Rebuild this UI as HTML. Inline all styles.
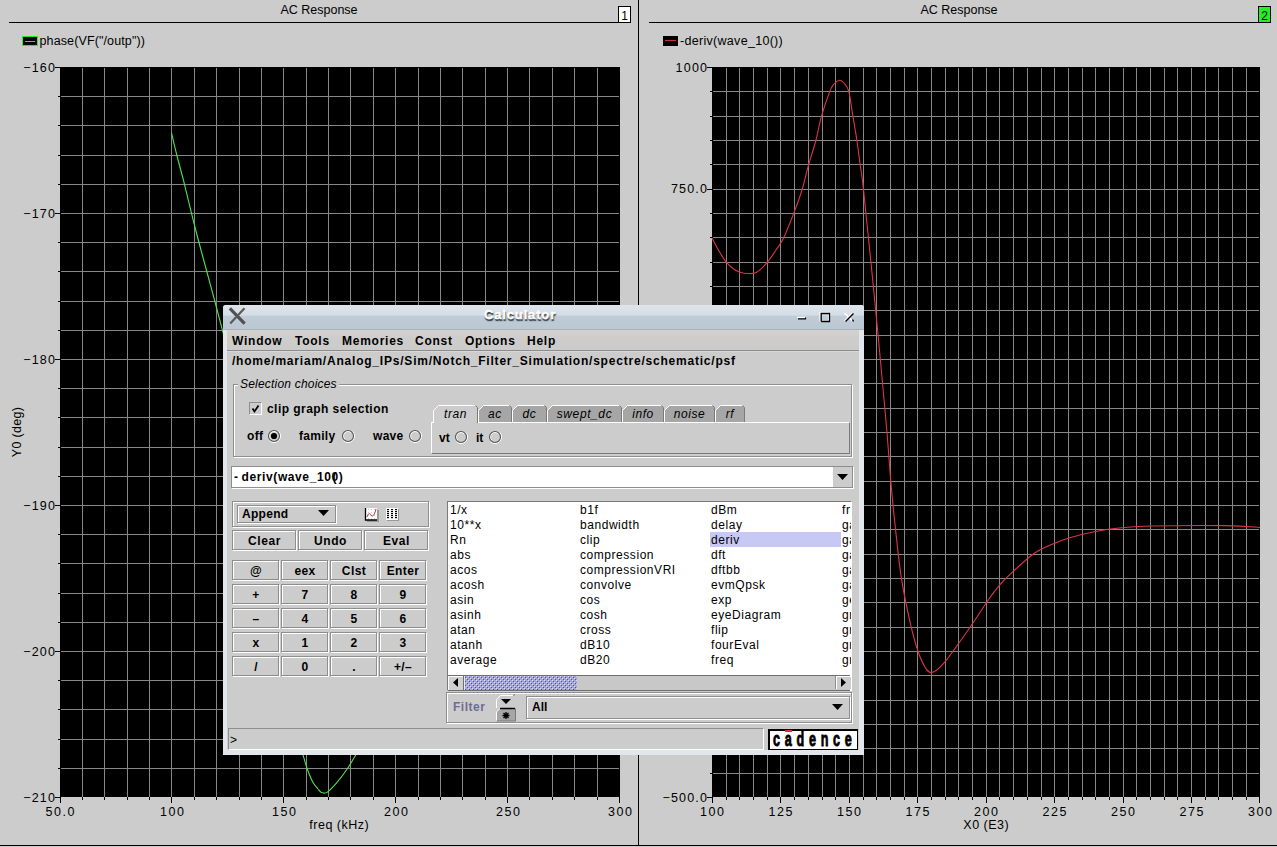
<!DOCTYPE html><html><head><meta charset="utf-8"><style>
html,body{margin:0;padding:0;}
body{width:1277px;height:847px;background:#cccccc;position:relative;overflow:hidden;font-family:"Liberation Sans",sans-serif;}
.a{position:absolute;}
</style></head><body>
<svg class="a" style="left:0;top:0" width="1277" height="847" viewBox="0 0 1277 847"><line x1="9" y1="22.5" x2="619" y2="22.5" stroke="#000" stroke-width="1"/><rect x="618.5" y="6.5" width="12" height="16" fill="#fff" stroke="#000"/><text x="624.5" y="19.5" font-family="Liberation Sans, sans-serif" font-size="12" text-anchor="middle" fill="#000">1</text><line x1="638.5" y1="0" x2="638.5" y2="846" stroke="#000"/><line x1="649" y1="22.5" x2="1259" y2="22.5" stroke="#000"/><rect x="1258.5" y="6.5" width="12" height="16" fill="#22ee22" stroke="#000"/><text x="1264.5" y="19.5" font-family="Liberation Sans, sans-serif" font-size="12" text-anchor="middle" fill="#000">2</text><line x1="0" y1="845.5" x2="1277" y2="845.5" stroke="#000"/><text x="319" y="14" font-family="Liberation Sans, sans-serif" font-size="12.5" text-anchor="middle" fill="#000">AC Response</text><text x="959" y="14" font-family="Liberation Sans, sans-serif" font-size="12.5" text-anchor="middle" fill="#000">AC Response</text><rect x="22.5" y="36.5" width="15" height="9" fill="#000" stroke="#22ee22"/><line x1="25" y1="41.5" x2="35" y2="41.5" stroke="#22ee22"/><text x="39.5" y="45" font-family="Liberation Sans, sans-serif" font-size="12.5" letter-spacing="0.12" fill="#000">phase(VF("/outp"))</text><rect x="663" y="36" width="15" height="10" fill="#000"/><line x1="665" y1="40.5" x2="676" y2="40.5" stroke="#cc3040"/><text x="680" y="45" font-family="Liberation Sans, sans-serif" font-size="12.5" letter-spacing="0.3" fill="#000">-deriv(wave_10())</text><rect x="60" y="67" width="560" height="730" fill="#000"/><path d="M82.5 68V797M104.5 68V797M127.5 68V797M149.5 68V797M171.5 68V797M194.5 68V797M216.5 68V797M239.5 68V797M261.5 68V797M283.5 68V797M306.5 68V797M328.5 68V797M350.5 68V797M373.5 68V797M395.5 68V797M418.5 68V797M440.5 68V797M462.5 68V797M485.5 68V797M507.5 68V797M529.5 68V797M552.5 68V797M574.5 68V797M597.5 68V797M61 96.5H619M61 125.5H619M61 155.5H619M61 184.5H619M61 213.5H619M61 242.5H619M61 271.5H619M61 301.5H619M61 330.5H619M61 359.5H619M61 388.5H619M61 417.5H619M61 447.5H619M61 476.5H619M61 505.5H619M61 534.5H619M61 563.5H619M61 593.5H619M61 622.5H619M61 651.5H619M61 680.5H619M61 709.5H619M61 739.5H619M61 768.5H619" stroke="#888888" stroke-width="1" fill="none"/><rect x="712" y="67" width="548" height="730" fill="#000"/><path d="M726.5 68V797M739.5 68V797M753.5 68V797M767.5 68V797M780.5 68V797M794.5 68V797M808.5 68V797M822.5 68V797M835.5 68V797M849.5 68V797M863.5 68V797M876.5 68V797M890.5 68V797M904.5 68V797M917.5 68V797M931.5 68V797M945.5 68V797M958.5 68V797M972.5 68V797M986.5 68V797M999.5 68V797M1013.5 68V797M1027.5 68V797M1041.5 68V797M1054.5 68V797M1068.5 68V797M1082.5 68V797M1095.5 68V797M1109.5 68V797M1123.5 68V797M1136.5 68V797M1150.5 68V797M1164.5 68V797M1177.5 68V797M1191.5 68V797M1205.5 68V797M1218.5 68V797M1232.5 68V797M1246.5 68V797M713 91.5H1259M713 116.5H1259M713 140.5H1259M713 164.5H1259M713 189.5H1259M713 213.5H1259M713 237.5H1259M713 262.5H1259M713 286.5H1259M713 310.5H1259M713 335.5H1259M713 359.5H1259M713 383.5H1259M713 408.5H1259M713 432.5H1259M713 456.5H1259M713 481.5H1259M713 505.5H1259M713 529.5H1259M713 554.5H1259M713 578.5H1259M713 602.5H1259M713 627.5H1259M713 651.5H1259M713 675.5H1259M713 700.5H1259M713 724.5H1259M713 748.5H1259M713 773.5H1259" stroke="#888888" stroke-width="1" fill="none"/><path d="M55 67.5H60M58 96.5H60M58 125.5H60M58 155.5H60M58 184.5H60M55 213.5H60M58 242.5H60M58 271.5H60M58 301.5H60M58 330.5H60M55 359.5H60M58 388.5H60M58 417.5H60M58 447.5H60M58 476.5H60M55 505.5H60M58 534.5H60M58 563.5H60M58 593.5H60M58 622.5H60M55 651.5H60M58 680.5H60M58 709.5H60M58 739.5H60M58 768.5H60M55 797.5H60M60.5 797V803M82.5 797V800M104.5 797V800M127.5 797V800M149.5 797V800M171.5 797V803M194.5 797V800M216.5 797V800M239.5 797V800M261.5 797V800M283.5 797V803M306.5 797V800M328.5 797V800M350.5 797V800M373.5 797V800M395.5 797V803M418.5 797V800M440.5 797V800M462.5 797V800M485.5 797V800M507.5 797V803M529.5 797V800M552.5 797V800M574.5 797V800M597.5 797V800M619.5 797V803M707 67.5H712M710 91.5H712M710 116.5H712M710 140.5H712M710 164.5H712M707 189.5H712M710 213.5H712M710 237.5H712M710 262.5H712M710 286.5H712M707 310.5H712M710 335.5H712M710 359.5H712M710 383.5H712M710 408.5H712M707 432.5H712M710 456.5H712M710 481.5H712M710 505.5H712M710 529.5H712M707 554.5H712M710 578.5H712M710 602.5H712M710 627.5H712M710 651.5H712M707 675.5H712M710 700.5H712M710 724.5H712M710 748.5H712M710 773.5H712M707 797.5H712M712.5 797V803M726.5 797V800M739.5 797V800M753.5 797V800M767.5 797V800M780.5 797V803M794.5 797V800M808.5 797V800M822.5 797V800M835.5 797V800M849.5 797V803M863.5 797V800M876.5 797V800M890.5 797V800M904.5 797V800M917.5 797V803M931.5 797V800M945.5 797V800M958.5 797V800M972.5 797V800M986.5 797V803M999.5 797V800M1013.5 797V800M1027.5 797V800M1041.5 797V800M1054.5 797V803M1068.5 797V800M1082.5 797V800M1095.5 797V800M1109.5 797V800M1123.5 797V803M1136.5 797V800M1150.5 797V800M1164.5 797V800M1177.5 797V800M1191.5 797V803M1205.5 797V800M1218.5 797V800M1232.5 797V800M1246.5 797V800M1259.5 797V803" stroke="#000" stroke-width="1" fill="none"/><text x="56.2" y="71.5" font-family="Liberation Sans, sans-serif" font-size="12.5" letter-spacing="1.2" text-anchor="end">&#8722;160</text><text x="56.2" y="217.5" font-family="Liberation Sans, sans-serif" font-size="12.5" letter-spacing="1.2" text-anchor="end">&#8722;170</text><text x="56.2" y="363.5" font-family="Liberation Sans, sans-serif" font-size="12.5" letter-spacing="1.2" text-anchor="end">&#8722;180</text><text x="56.2" y="509.5" font-family="Liberation Sans, sans-serif" font-size="12.5" letter-spacing="1.2" text-anchor="end">&#8722;190</text><text x="56.2" y="655.5" font-family="Liberation Sans, sans-serif" font-size="12.5" letter-spacing="1.2" text-anchor="end">&#8722;200</text><text x="56.2" y="801.5" font-family="Liberation Sans, sans-serif" font-size="12.5" letter-spacing="1.2" text-anchor="end">&#8722;210</text><text x="60.8" y="816" font-family="Liberation Sans, sans-serif" font-size="12.5" letter-spacing="1.6" text-anchor="middle">50.0</text><text x="172.8" y="816" font-family="Liberation Sans, sans-serif" font-size="12.5" letter-spacing="1.6" text-anchor="middle">100</text><text x="284.8" y="816" font-family="Liberation Sans, sans-serif" font-size="12.5" letter-spacing="1.6" text-anchor="middle">150</text><text x="396.8" y="816" font-family="Liberation Sans, sans-serif" font-size="12.5" letter-spacing="1.6" text-anchor="middle">200</text><text x="508.8" y="816" font-family="Liberation Sans, sans-serif" font-size="12.5" letter-spacing="1.6" text-anchor="middle">250</text><text x="620.8" y="816" font-family="Liberation Sans, sans-serif" font-size="12.5" letter-spacing="1.6" text-anchor="middle">300</text><text x="339.3" y="828.5" font-family="Liberation Sans, sans-serif" font-size="12.5" letter-spacing="0.5" text-anchor="middle">freq (kHz)</text><text transform="translate(20.5,432) rotate(-90)" font-family="Liberation Sans, sans-serif" font-size="12.5" letter-spacing="0.3" text-anchor="middle">Y0 (deg)</text><text x="708.2" y="71.5" font-family="Liberation Sans, sans-serif" font-size="12.5" letter-spacing="1.2" text-anchor="end">1000</text><text x="708.2" y="193.16666666666669" font-family="Liberation Sans, sans-serif" font-size="12.5" letter-spacing="1.2" text-anchor="end">750.0</text><text x="708.2" y="314.83333333333337" font-family="Liberation Sans, sans-serif" font-size="12.5" letter-spacing="1.2" text-anchor="end">500.0</text><text x="708.2" y="436.5" font-family="Liberation Sans, sans-serif" font-size="12.5" letter-spacing="1.2" text-anchor="end">250.0</text><text x="708.2" y="558.1666666666667" font-family="Liberation Sans, sans-serif" font-size="12.5" letter-spacing="1.2" text-anchor="end">0.0</text><text x="708.2" y="679.8333333333334" font-family="Liberation Sans, sans-serif" font-size="12.5" letter-spacing="1.2" text-anchor="end">&#8722;250.0</text><text x="708.2" y="801.5" font-family="Liberation Sans, sans-serif" font-size="12.5" letter-spacing="1.2" text-anchor="end">&#8722;500.0</text><text x="712.8" y="816" font-family="Liberation Sans, sans-serif" font-size="12.5" letter-spacing="1.6" text-anchor="middle">100</text><text x="781.3" y="816" font-family="Liberation Sans, sans-serif" font-size="12.5" letter-spacing="1.6" text-anchor="middle">125</text><text x="849.8" y="816" font-family="Liberation Sans, sans-serif" font-size="12.5" letter-spacing="1.6" text-anchor="middle">150</text><text x="918.3" y="816" font-family="Liberation Sans, sans-serif" font-size="12.5" letter-spacing="1.6" text-anchor="middle">175</text><text x="986.8" y="816" font-family="Liberation Sans, sans-serif" font-size="12.5" letter-spacing="1.6" text-anchor="middle">200</text><text x="1055.3" y="816" font-family="Liberation Sans, sans-serif" font-size="12.5" letter-spacing="1.6" text-anchor="middle">225</text><text x="1123.8" y="816" font-family="Liberation Sans, sans-serif" font-size="12.5" letter-spacing="1.6" text-anchor="middle">250</text><text x="1192.3" y="816" font-family="Liberation Sans, sans-serif" font-size="12.5" letter-spacing="1.6" text-anchor="middle">275</text><text x="1260.8" y="816" font-family="Liberation Sans, sans-serif" font-size="12.5" letter-spacing="1.6" text-anchor="middle">300</text><text x="986.3" y="828.5" font-family="Liberation Sans, sans-serif" font-size="12.5" letter-spacing="0.5" text-anchor="middle">X0 (E3)</text><path d="M171.5 133C172.4 136.8 174.7 146.9 176.9 155.5C179.1 164.1 182.1 174.7 184.5 184.4C186.9 194.1 189.5 205.3 191.6 213.7C193.7 222.1 194.5 225.4 197 235C199.5 244.6 203.8 260.5 206.8 271.5C209.8 282.5 212.2 291.4 214.8 301.2C217.4 311.0 220.6 323.3 222.5 330.4C224.4 337.5 225.4 341.7 226 344M303 755C303.7 757.3 305.7 764.5 307.3 769C308.9 773.5 311.1 779.0 312.9 782.3C314.7 785.6 316.6 787.3 318 789C319.4 790.7 319.9 791.8 321.4 792.4C322.9 793.0 324.5 793.9 327 792.4C329.5 790.9 332.9 787.2 336.4 783.2C339.8 779.2 344.5 772.9 347.7 768.2C350.9 763.5 354.4 757.2 355.7 755" fill="none" stroke="#50e050" stroke-width="1.1"/><path d="M712 238C713.2 240.2 716.6 247.0 719 251C721.4 255.0 724.0 259.3 726.3 262.2C728.6 265.1 730.7 266.8 733 268.5C735.3 270.2 737.5 271.5 740 272.3C742.5 273.1 745.2 273.5 748 273.5C750.8 273.5 753.5 274.2 756.7 272.3C759.9 270.4 764.2 265.9 767.4 262.2C770.6 258.5 773.3 254.1 776 250C778.7 245.9 780.8 243.8 783.7 237.7C786.6 231.6 790.5 221.6 793.6 213.6C796.7 205.6 799.7 197.6 802.1 189.6C804.5 181.6 806.0 173.9 808.3 165.8C810.6 157.7 813.5 149.3 815.7 141C817.9 132.7 819.1 124.5 821.5 116.2C823.9 107.9 827.7 96.8 829.8 91.4C831.9 86.0 832.4 85.9 834 84C835.6 82.1 838.0 80.4 839.7 80.2C841.4 80.0 842.5 81.1 844 83C845.5 84.9 847.3 85.9 848.8 91.4C850.3 96.9 851.5 107.9 852.9 116.2C854.3 124.5 855.8 132.7 857 141C858.2 149.3 859.2 157.5 860.3 165.8C861.4 174.1 861.0 166.5 863.6 190.6C866.2 214.7 872.0 272.2 875.7 310.4C879.4 348.6 883.4 391.6 885.9 420C888.4 448.4 889.2 462.8 890.8 481C892.4 499.2 893.7 512.8 895.5 529C897.3 545.2 898.9 562.5 901.4 578.4C903.9 594.3 907.9 612.5 910.6 624.6C913.4 636.7 915.5 643.9 917.9 651C920.3 658.1 922.7 663.4 925 667C927.3 670.6 928.6 673.2 931.8 672.5C935.0 671.8 937.8 670.3 944.3 662.6C950.8 654.9 963.6 636.5 970.7 626.3C977.9 616.1 982.3 608.5 987.2 601.5C992.1 594.5 995.7 589.6 1000 584.6C1004.3 579.6 1007.2 576.9 1013 571.6C1018.8 566.3 1027.8 557.7 1034.7 553C1041.6 548.3 1048.1 546.0 1054.2 543.4C1060.3 540.8 1064.7 539.3 1071.6 537.3C1078.5 535.3 1087.1 533.1 1095.4 531.5C1103.7 529.9 1112.1 528.7 1121.5 527.8C1130.9 526.9 1134.5 526.4 1151.8 526C1169.1 525.6 1207.6 525.4 1225.6 525.6C1243.6 525.9 1254.3 527.2 1260 527.5" fill="none" stroke="#dd3545" stroke-width="1.1"/></svg>
<style>.t{white-space:nowrap;font-family:"Liberation Sans",sans-serif;font-size:12px;line-height:14px;color:#000}.b{font-weight:bold}</style>
<div class="a" style="left:223px;top:305px;width:641px;height:450px;background:#e3e7ec;border-radius:3px 3px 0 0;"></div>
<div class="a" style="left:227px;top:330px;width:632px;height:420px;background:#cccccc;"></div>
<div class="a" style="left:223px;top:305px;width:641px;height:25px;background:linear-gradient(#dfe5ec 0px,#d4dce5 10px,#c0ccd7 11.5px,#bac8d4 24px);border-radius:3px 3px 0 0;border-bottom:1px solid #a9b0b8;box-sizing:border-box;"></div>
<svg class="a" style="left:228px;top:307px" width="19" height="18" viewBox="0 0 19 18"><path d="M3 2.5 L15.5 15.5" stroke="#505050" stroke-width="3.2" stroke-linecap="square"/><path d="M15.8 2 L3 15.8" stroke="#5a5a5a" stroke-width="2.2" stroke-linecap="square"/></svg>
<div class="a t" style="left:484px;top:307.5px;font-weight:bold;font-size:13px;letter-spacing:0.85px;color:#fdfdfd;-webkit-text-stroke:0.35px #fff;text-shadow:0.5px 1.5px 0.8px #3c424a,1px 2px 1.5px #7a828a;">Calculator</div>
<svg class="a" style="left:792px;top:306px" width="70" height="22" viewBox="0 0 70 22"><path d="M5 11.5H13" stroke="#fff" stroke-width="1.5"/><path d="M6 12.8H13.5V11.5" stroke="#000" stroke-width="1.2" fill="none"/><rect x="28" y="6.5" width="8.5" height="8.5" fill="none" stroke="#fff" stroke-width="1.2"/><path d="M29.2 15.5V7.5H37.5V15.5H29.2" stroke="#000" stroke-width="1.3" fill="none"/><path d="M52.5 7 L60.5 15 M60.5 7 L52.5 15" stroke="#fff" stroke-width="1.6"/><path d="M61.5 7.5 L53.5 15.5 M60.5 13.5 L61.5 15.5" stroke="#000" stroke-width="1.4"/></svg>
<div class="a" style="left:227px;top:330px;width:632px;height:20px;background:linear-gradient(#d3d2d0,#cecdcb 40%,#cbcbcb);"></div>
<div class="a" style="left:227px;top:350px;width:632px;height:1px;background:#8c8c8c;"></div>
<div class="a" style="left:227px;top:351px;width:632px;height:1px;background:#d8d8d8;"></div>
<div class="a t" style="left:232px;top:334px;font-weight:bold;letter-spacing:0.75px;">Window</div>
<div class="a t" style="left:295px;top:334px;font-weight:bold;letter-spacing:0.75px;">Tools</div>
<div class="a t" style="left:342px;top:334px;font-weight:bold;letter-spacing:0.75px;">Memories</div>
<div class="a t" style="left:415px;top:334px;font-weight:bold;letter-spacing:0.75px;">Const</div>
<div class="a t" style="left:465px;top:334px;font-weight:bold;letter-spacing:0.75px;">Options</div>
<div class="a t" style="left:527px;top:334px;font-weight:bold;letter-spacing:0.75px;">Help</div>
<div class="a t" style="left:232px;top:354px;font-weight:bold;letter-spacing:0.79px;">/home/mariam/Analog_IPs/Sim/Notch_Filter_Simulation/spectre/schematic/psf</div>
<div class="a" style="left:234px;top:385px;width:617px;height:71px;border:1px solid #fff;"></div>
<div class="a" style="left:233px;top:384px;width:617px;height:71px;border:1px solid #8e8e8e;"></div>
<div class="a t" style="left:238px;top:377px;font-style:italic;background:#cccccc;padding:0 2px;letter-spacing:0.2px">Selection choices</div>
<div class="a" style="left:249px;top:402px;width:11px;height:11px;border-top:1px solid #8e8e8e;border-left:1px solid #8e8e8e;border-right:1px solid #fff;border-bottom:1px solid #fff;"></div>
<svg class="a" style="left:250px;top:403px" width="11" height="11" viewBox="0 0 11 11"><path d="M2.5 5.5 L4.5 8.5 L8.5 2.5" stroke="#000" stroke-width="1.8" fill="none"/></svg>
<div class="a t" style="left:267px;top:402px;font-weight:bold;letter-spacing:0.45px;">clip graph selection</div>
<div class="a t" style="left:247px;top:429px;font-weight:bold;letter-spacing:0.3px;">off</div>
<svg class="a" style="left:267px;top:429px" width="14" height="14" viewBox="0 0 14 14"><path d="M11.6 2.4 A6.5 6.5 0 0 1 2.4 11.6" stroke="#fff" fill="none"/><path d="M3.8 10.2 A4.5 4.5 0 0 1 10.2 3.8" stroke="#fff" fill="none"/><circle cx="7" cy="7" r="5.5" fill="none" stroke="#555" stroke-width="1.1"/><circle cx="7" cy="7" r="3.1" fill="#000"/></svg>
<div class="a t" style="left:299px;top:429px;font-weight:bold;letter-spacing:0.3px;">family</div>
<svg class="a" style="left:341px;top:429px" width="14" height="14" viewBox="0 0 14 14"><path d="M11.6 2.4 A6.5 6.5 0 0 1 2.4 11.6" stroke="#fff" fill="none"/><path d="M3.8 10.2 A4.5 4.5 0 0 1 10.2 3.8" stroke="#fff" fill="none"/><circle cx="7" cy="7" r="5.5" fill="none" stroke="#555" stroke-width="1.1"/></svg>
<div class="a t" style="left:373px;top:429px;font-weight:bold;letter-spacing:0.3px;">wave</div>
<svg class="a" style="left:408px;top:429px" width="14" height="14" viewBox="0 0 14 14"><path d="M11.6 2.4 A6.5 6.5 0 0 1 2.4 11.6" stroke="#fff" fill="none"/><path d="M3.8 10.2 A4.5 4.5 0 0 1 10.2 3.8" stroke="#fff" fill="none"/><circle cx="7" cy="7" r="5.5" fill="none" stroke="#555" stroke-width="1.1"/></svg>
<div class="a" style="left:431px;top:422px;width:417px;height:30px;background:#cccccc;border-top:1px solid #fff;border-left:1px solid #fff;border-right:1px solid #7a7a7a;border-bottom:1px solid #7a7a7a;"></div>
<svg class="a" style="left:478px;top:405px" width="34" height="17" viewBox="0 0 34 17"><path d="M0.5 17 V5.5 L5.5 0.5 H31.5 L33.5 2.5 V17" fill="#a6a6a6" stroke="none"/><path d="M0.5 17 V5.5 L5.5 0.5 H31.5" fill="none" stroke="#fff"/><path d="M31.5 0.5 L33.5 2.5 V17" fill="none" stroke="#7a7a7a"/></svg>
<div class="a t" style="left:478px;top:407px;width:34px;text-align:center;font-style:italic;letter-spacing:0.6px;">ac</div>
<svg class="a" style="left:512px;top:405px" width="35" height="17" viewBox="0 0 35 17"><path d="M0.5 17 V5.5 L5.5 0.5 H32.5 L34.5 2.5 V17" fill="#a6a6a6" stroke="none"/><path d="M0.5 17 V5.5 L5.5 0.5 H32.5" fill="none" stroke="#fff"/><path d="M32.5 0.5 L34.5 2.5 V17" fill="none" stroke="#7a7a7a"/></svg>
<div class="a t" style="left:512px;top:407px;width:35px;text-align:center;font-style:italic;letter-spacing:0.6px;">dc</div>
<svg class="a" style="left:547px;top:405px" width="75" height="17" viewBox="0 0 75 17"><path d="M0.5 17 V5.5 L5.5 0.5 H72.5 L74.5 2.5 V17" fill="#a6a6a6" stroke="none"/><path d="M0.5 17 V5.5 L5.5 0.5 H72.5" fill="none" stroke="#fff"/><path d="M72.5 0.5 L74.5 2.5 V17" fill="none" stroke="#7a7a7a"/></svg>
<div class="a t" style="left:547px;top:407px;width:75px;text-align:center;font-style:italic;letter-spacing:0.6px;">swept_dc</div>
<svg class="a" style="left:622px;top:405px" width="42" height="17" viewBox="0 0 42 17"><path d="M0.5 17 V5.5 L5.5 0.5 H39.5 L41.5 2.5 V17" fill="#a6a6a6" stroke="none"/><path d="M0.5 17 V5.5 L5.5 0.5 H39.5" fill="none" stroke="#fff"/><path d="M39.5 0.5 L41.5 2.5 V17" fill="none" stroke="#7a7a7a"/></svg>
<div class="a t" style="left:622px;top:407px;width:42px;text-align:center;font-style:italic;letter-spacing:0.6px;">info</div>
<svg class="a" style="left:664px;top:405px" width="51" height="17" viewBox="0 0 51 17"><path d="M0.5 17 V5.5 L5.5 0.5 H48.5 L50.5 2.5 V17" fill="#a6a6a6" stroke="none"/><path d="M0.5 17 V5.5 L5.5 0.5 H48.5" fill="none" stroke="#fff"/><path d="M48.5 0.5 L50.5 2.5 V17" fill="none" stroke="#7a7a7a"/></svg>
<div class="a t" style="left:664px;top:407px;width:51px;text-align:center;font-style:italic;letter-spacing:0.6px;">noise</div>
<svg class="a" style="left:715px;top:405px" width="30" height="17" viewBox="0 0 30 17"><path d="M0.5 17 V5.5 L5.5 0.5 H27.5 L29.5 2.5 V17" fill="#a6a6a6" stroke="none"/><path d="M0.5 17 V5.5 L5.5 0.5 H27.5" fill="none" stroke="#fff"/><path d="M27.5 0.5 L29.5 2.5 V17" fill="none" stroke="#7a7a7a"/></svg>
<div class="a t" style="left:715px;top:407px;width:30px;text-align:center;font-style:italic;letter-spacing:0.6px;">rf</div>
<svg class="a" style="left:433px;top:405px" width="45" height="18" viewBox="0 0 45 18"><path d="M0.5 18 V5.5 L5.5 0.5 H42.5 L44.5 2.5 V18" fill="#cccccc" stroke="none"/><path d="M0.5 18 V5.5 L5.5 0.5 H42.5" fill="none" stroke="#fff"/><path d="M42.5 0.5 L44.5 2.5 V18" fill="none" stroke="#7a7a7a"/></svg>
<div class="a t" style="left:433px;top:407px;width:45px;text-align:center;font-style:italic;letter-spacing:0.6px;">tran</div>
<div class="a" style="left:434px;top:422px;width:43px;height:2px;background:#cccccc;"></div>
<div class="a t" style="left:439px;top:431px;font-weight:bold;">vt</div>
<svg class="a" style="left:454px;top:430px" width="14" height="14" viewBox="0 0 14 14"><path d="M11.6 2.4 A6.5 6.5 0 0 1 2.4 11.6" stroke="#fff" fill="none"/><path d="M3.8 10.2 A4.5 4.5 0 0 1 10.2 3.8" stroke="#fff" fill="none"/><circle cx="7" cy="7" r="5.5" fill="none" stroke="#555" stroke-width="1.1"/></svg>
<div class="a t" style="left:476px;top:431px;font-weight:bold;">it</div>
<svg class="a" style="left:488px;top:430px" width="14" height="14" viewBox="0 0 14 14"><path d="M11.6 2.4 A6.5 6.5 0 0 1 2.4 11.6" stroke="#fff" fill="none"/><path d="M3.8 10.2 A4.5 4.5 0 0 1 10.2 3.8" stroke="#fff" fill="none"/><circle cx="7" cy="7" r="5.5" fill="none" stroke="#555" stroke-width="1.1"/></svg>
<div class="a" style="left:231px;top:466px;width:601px;height:20px;background:#fff;border:1px solid #8e8e8e;box-shadow:1px 1px 0 #fff;"></div>
<div class="a t" style="left:234px;top:470px;font-weight:bold;letter-spacing:0.6px;">-&#8201;deriv(wave_10<span style="position:relative">0<span style="position:absolute;left:1px;top:0">(</span></span>)</div>
<div class="a" style="left:833px;top:466px;width:19px;height:20px;background:#cccccc;border-top:1px solid #8e8e8e;border-right:1px solid #8e8e8e;border-bottom:1px solid #8e8e8e;box-shadow:1px 1px 0 #fff;"></div>
<svg class="a" style="left:837px;top:474px" width="12" height="7"><path d="M0 0H11L5.5 6Z" fill="#000"/></svg>
<div class="a" style="left:233px;top:502px;width:195px;height:24px;border:1px solid #fff;"></div>
<div class="a" style="left:232px;top:501px;width:195px;height:24px;border:1px solid #8e8e8e;"></div>
<div class="a" style="left:237px;top:505px;width:97px;height:16px;border:1px solid #8e8e8e;box-shadow:inset 1px 1px 0 #fff,1px 1px 0 #fff;background:#cccccc"></div>
<div class="a t" style="left:242px;top:507px;font-weight:bold;letter-spacing:0.3px;">Append</div>
<svg class="a" style="left:318px;top:510px" width="12" height="7"><path d="M0 0H11L5.5 6Z" fill="#000"/></svg>
<svg class="a" style="left:364px;top:507px" width="38" height="16" viewBox="0 0 38 16"><rect x="3" y="3" width="12" height="12" fill="#999"/><rect x="1" y="1" width="12" height="12" fill="#fff"/><path d="M4 2.5H13M4 5.5H13M4 8.5H13M4 11.5H13" stroke="#ccc" stroke-dasharray="1 2"/><path d="M1.5 1V13H13" stroke="#000" stroke-width="1.3" fill="none"/><path d="M3 10 C4 6 6 6 7 8 C8 10 10 10 12 2" stroke="#b03030" fill="none" stroke-width="1"/><rect x="23" y="2" width="12" height="12" fill="#999"/><rect x="22" y="1" width="12" height="12" fill="#fff"/><rect x="23" y="2" width="2" height="1.2" fill="#000"/><rect x="23" y="4" width="2" height="1.2" fill="#000"/><rect x="23" y="6" width="2" height="1.2" fill="#000"/><rect x="23" y="8" width="2" height="1.2" fill="#000"/><rect x="23" y="10" width="2" height="1.2" fill="#000"/><rect x="27" y="2" width="2" height="1.2" fill="#000"/><rect x="27" y="4" width="2" height="1.2" fill="#000"/><rect x="27" y="6" width="2" height="1.2" fill="#000"/><rect x="27" y="8" width="2" height="1.2" fill="#000"/><rect x="27" y="10" width="2" height="1.2" fill="#000"/><rect x="31" y="2" width="2" height="1.2" fill="#000"/><rect x="31" y="4" width="2" height="1.2" fill="#000"/><rect x="31" y="6" width="2" height="1.2" fill="#000"/><rect x="31" y="8" width="2" height="1.2" fill="#000"/><rect x="31" y="10" width="2" height="1.2" fill="#000"/></svg>
<div class="a" style="left:233px;top:531px;width:62px;height:18px;border:1px solid #fff;"></div>
<div class="a" style="left:232px;top:530px;width:62px;height:18px;border:1px solid #8e8e8e;"></div>
<div class="a t" style="left:233px;top:534px;width:63px;text-align:center;font-weight:bold;letter-spacing:0.6px;">Clear</div>
<div class="a" style="left:299px;top:531px;width:62px;height:18px;border:1px solid #fff;"></div>
<div class="a" style="left:298px;top:530px;width:62px;height:18px;border:1px solid #8e8e8e;"></div>
<div class="a t" style="left:299px;top:534px;width:63px;text-align:center;font-weight:bold;letter-spacing:0.6px;">Undo</div>
<div class="a" style="left:365px;top:531px;width:62px;height:18px;border:1px solid #fff;"></div>
<div class="a" style="left:364px;top:530px;width:62px;height:18px;border:1px solid #8e8e8e;"></div>
<div class="a t" style="left:365px;top:534px;width:63px;text-align:center;font-weight:bold;letter-spacing:0.6px;">Eval</div>
<div class="a" style="left:233px;top:561px;width:45px;height:18px;border:1px solid #fff;"></div>
<div class="a" style="left:232px;top:560px;width:45px;height:18px;border:1px solid #8e8e8e;"></div>
<div class="a t" style="left:233px;top:564px;width:46px;text-align:center;font-weight:bold;letter-spacing:0.4px;">@</div>
<div class="a" style="left:282px;top:561px;width:45px;height:18px;border:1px solid #fff;"></div>
<div class="a" style="left:281px;top:560px;width:45px;height:18px;border:1px solid #8e8e8e;"></div>
<div class="a t" style="left:282px;top:564px;width:46px;text-align:center;font-weight:bold;letter-spacing:0.4px;">eex</div>
<div class="a" style="left:331px;top:561px;width:45px;height:18px;border:1px solid #fff;"></div>
<div class="a" style="left:330px;top:560px;width:45px;height:18px;border:1px solid #8e8e8e;"></div>
<div class="a t" style="left:331px;top:564px;width:46px;text-align:center;font-weight:bold;letter-spacing:0.4px;">Clst</div>
<div class="a" style="left:380px;top:561px;width:45px;height:18px;border:1px solid #fff;"></div>
<div class="a" style="left:379px;top:560px;width:45px;height:18px;border:1px solid #8e8e8e;"></div>
<div class="a t" style="left:380px;top:564px;width:46px;text-align:center;font-weight:bold;letter-spacing:0.4px;">Enter</div>
<div class="a" style="left:233px;top:585px;width:45px;height:18px;border:1px solid #fff;"></div>
<div class="a" style="left:232px;top:584px;width:45px;height:18px;border:1px solid #8e8e8e;"></div>
<div class="a t" style="left:233px;top:588px;width:46px;text-align:center;font-weight:bold;letter-spacing:0.4px;">+</div>
<div class="a" style="left:282px;top:585px;width:45px;height:18px;border:1px solid #fff;"></div>
<div class="a" style="left:281px;top:584px;width:45px;height:18px;border:1px solid #8e8e8e;"></div>
<div class="a t" style="left:282px;top:588px;width:46px;text-align:center;font-weight:bold;letter-spacing:0.4px;">7</div>
<div class="a" style="left:331px;top:585px;width:45px;height:18px;border:1px solid #fff;"></div>
<div class="a" style="left:330px;top:584px;width:45px;height:18px;border:1px solid #8e8e8e;"></div>
<div class="a t" style="left:331px;top:588px;width:46px;text-align:center;font-weight:bold;letter-spacing:0.4px;">8</div>
<div class="a" style="left:380px;top:585px;width:45px;height:18px;border:1px solid #fff;"></div>
<div class="a" style="left:379px;top:584px;width:45px;height:18px;border:1px solid #8e8e8e;"></div>
<div class="a t" style="left:380px;top:588px;width:46px;text-align:center;font-weight:bold;letter-spacing:0.4px;">9</div>
<div class="a" style="left:233px;top:609px;width:45px;height:18px;border:1px solid #fff;"></div>
<div class="a" style="left:232px;top:608px;width:45px;height:18px;border:1px solid #8e8e8e;"></div>
<div class="a t" style="left:233px;top:612px;width:46px;text-align:center;font-weight:bold;letter-spacing:0.4px;">&#8211;</div>
<div class="a" style="left:282px;top:609px;width:45px;height:18px;border:1px solid #fff;"></div>
<div class="a" style="left:281px;top:608px;width:45px;height:18px;border:1px solid #8e8e8e;"></div>
<div class="a t" style="left:282px;top:612px;width:46px;text-align:center;font-weight:bold;letter-spacing:0.4px;">4</div>
<div class="a" style="left:331px;top:609px;width:45px;height:18px;border:1px solid #fff;"></div>
<div class="a" style="left:330px;top:608px;width:45px;height:18px;border:1px solid #8e8e8e;"></div>
<div class="a t" style="left:331px;top:612px;width:46px;text-align:center;font-weight:bold;letter-spacing:0.4px;">5</div>
<div class="a" style="left:380px;top:609px;width:45px;height:18px;border:1px solid #fff;"></div>
<div class="a" style="left:379px;top:608px;width:45px;height:18px;border:1px solid #8e8e8e;"></div>
<div class="a t" style="left:380px;top:612px;width:46px;text-align:center;font-weight:bold;letter-spacing:0.4px;">6</div>
<div class="a" style="left:233px;top:633px;width:45px;height:18px;border:1px solid #fff;"></div>
<div class="a" style="left:232px;top:632px;width:45px;height:18px;border:1px solid #8e8e8e;"></div>
<div class="a t" style="left:233px;top:636px;width:46px;text-align:center;font-weight:bold;letter-spacing:0.4px;">x</div>
<div class="a" style="left:282px;top:633px;width:45px;height:18px;border:1px solid #fff;"></div>
<div class="a" style="left:281px;top:632px;width:45px;height:18px;border:1px solid #8e8e8e;"></div>
<div class="a t" style="left:282px;top:636px;width:46px;text-align:center;font-weight:bold;letter-spacing:0.4px;">1</div>
<div class="a" style="left:331px;top:633px;width:45px;height:18px;border:1px solid #fff;"></div>
<div class="a" style="left:330px;top:632px;width:45px;height:18px;border:1px solid #8e8e8e;"></div>
<div class="a t" style="left:331px;top:636px;width:46px;text-align:center;font-weight:bold;letter-spacing:0.4px;">2</div>
<div class="a" style="left:380px;top:633px;width:45px;height:18px;border:1px solid #fff;"></div>
<div class="a" style="left:379px;top:632px;width:45px;height:18px;border:1px solid #8e8e8e;"></div>
<div class="a t" style="left:380px;top:636px;width:46px;text-align:center;font-weight:bold;letter-spacing:0.4px;">3</div>
<div class="a" style="left:233px;top:657px;width:45px;height:18px;border:1px solid #fff;"></div>
<div class="a" style="left:232px;top:656px;width:45px;height:18px;border:1px solid #8e8e8e;"></div>
<div class="a t" style="left:233px;top:660px;width:46px;text-align:center;font-weight:bold;letter-spacing:0.4px;">/</div>
<div class="a" style="left:282px;top:657px;width:45px;height:18px;border:1px solid #fff;"></div>
<div class="a" style="left:281px;top:656px;width:45px;height:18px;border:1px solid #8e8e8e;"></div>
<div class="a t" style="left:282px;top:660px;width:46px;text-align:center;font-weight:bold;letter-spacing:0.4px;">0</div>
<div class="a" style="left:331px;top:657px;width:45px;height:18px;border:1px solid #fff;"></div>
<div class="a" style="left:330px;top:656px;width:45px;height:18px;border:1px solid #8e8e8e;"></div>
<div class="a t" style="left:331px;top:660px;width:46px;text-align:center;font-weight:bold;letter-spacing:0.4px;">.</div>
<div class="a" style="left:380px;top:657px;width:45px;height:18px;border:1px solid #fff;"></div>
<div class="a" style="left:379px;top:656px;width:45px;height:18px;border:1px solid #8e8e8e;"></div>
<div class="a t" style="left:380px;top:660px;width:46px;text-align:center;font-weight:bold;letter-spacing:0.4px;">+/&#8211;</div>
<div class="a" style="left:447px;top:501px;width:403px;height:188px;background:#fff;border-top:1px solid #7a7a7a;border-left:1px solid #7a7a7a;border-right:1px solid #fff;border-bottom:1px solid #fff;overflow:hidden"></div>
<div class="a" style="left:710px;top:532px;width:131px;height:15px;background:#c8c8f4;"></div>
<div class="a t" style="left:450px;top:503px;font-size:12px;letter-spacing:0.55px;">1/x</div>
<div class="a t" style="left:450px;top:518px;font-size:12px;letter-spacing:0.55px;">10**x</div>
<div class="a t" style="left:450px;top:533px;font-size:12px;letter-spacing:0.55px;">Rn</div>
<div class="a t" style="left:450px;top:548px;font-size:12px;letter-spacing:0.55px;">abs</div>
<div class="a t" style="left:450px;top:563px;font-size:12px;letter-spacing:0.55px;">acos</div>
<div class="a t" style="left:450px;top:578px;font-size:12px;letter-spacing:0.55px;">acosh</div>
<div class="a t" style="left:450px;top:593px;font-size:12px;letter-spacing:0.55px;">asin</div>
<div class="a t" style="left:450px;top:608px;font-size:12px;letter-spacing:0.55px;">asinh</div>
<div class="a t" style="left:450px;top:623px;font-size:12px;letter-spacing:0.55px;">atan</div>
<div class="a t" style="left:450px;top:638px;font-size:12px;letter-spacing:0.55px;">atanh</div>
<div class="a t" style="left:450px;top:653px;font-size:12px;letter-spacing:0.55px;">average</div>
<div class="a t" style="left:580px;top:503px;font-size:12px;letter-spacing:0.55px;">b1f</div>
<div class="a t" style="left:580px;top:518px;font-size:12px;letter-spacing:0.55px;">bandwidth</div>
<div class="a t" style="left:580px;top:533px;font-size:12px;letter-spacing:0.55px;">clip</div>
<div class="a t" style="left:580px;top:548px;font-size:12px;letter-spacing:0.55px;">compression</div>
<div class="a t" style="left:580px;top:563px;font-size:12px;letter-spacing:0.55px;">compressionVRI</div>
<div class="a t" style="left:580px;top:578px;font-size:12px;letter-spacing:0.55px;">convolve</div>
<div class="a t" style="left:580px;top:593px;font-size:12px;letter-spacing:0.55px;">cos</div>
<div class="a t" style="left:580px;top:608px;font-size:12px;letter-spacing:0.55px;">cosh</div>
<div class="a t" style="left:580px;top:623px;font-size:12px;letter-spacing:0.55px;">cross</div>
<div class="a t" style="left:580px;top:638px;font-size:12px;letter-spacing:0.55px;">dB10</div>
<div class="a t" style="left:580px;top:653px;font-size:12px;letter-spacing:0.55px;">dB20</div>
<div class="a t" style="left:711px;top:503px;font-size:12px;letter-spacing:0.55px;">dBm</div>
<div class="a t" style="left:711px;top:518px;font-size:12px;letter-spacing:0.55px;">delay</div>
<div class="a t" style="left:711px;top:533px;font-size:12px;letter-spacing:0.55px;">deriv</div>
<div class="a t" style="left:711px;top:548px;font-size:12px;letter-spacing:0.55px;">dft</div>
<div class="a t" style="left:711px;top:563px;font-size:12px;letter-spacing:0.55px;">dftbb</div>
<div class="a t" style="left:711px;top:578px;font-size:12px;letter-spacing:0.55px;">evmQpsk</div>
<div class="a t" style="left:711px;top:593px;font-size:12px;letter-spacing:0.55px;">exp</div>
<div class="a t" style="left:711px;top:608px;font-size:12px;letter-spacing:0.55px;">eyeDiagram</div>
<div class="a t" style="left:711px;top:623px;font-size:12px;letter-spacing:0.55px;">flip</div>
<div class="a t" style="left:711px;top:638px;font-size:12px;letter-spacing:0.55px;">fourEval</div>
<div class="a t" style="left:711px;top:653px;font-size:12px;letter-spacing:0.55px;">freq</div>
<div class="a t" style="left:842px;top:503px;font-size:12px;letter-spacing:0.55px;width:9px;overflow:hidden;">fr</div>
<div class="a t" style="left:842px;top:518px;font-size:12px;letter-spacing:0.55px;width:9px;overflow:hidden;">ga</div>
<div class="a t" style="left:842px;top:533px;font-size:12px;letter-spacing:0.55px;width:9px;overflow:hidden;">ga</div>
<div class="a t" style="left:842px;top:548px;font-size:12px;letter-spacing:0.55px;width:9px;overflow:hidden;">ga</div>
<div class="a t" style="left:842px;top:563px;font-size:12px;letter-spacing:0.55px;width:9px;overflow:hidden;">ga</div>
<div class="a t" style="left:842px;top:578px;font-size:12px;letter-spacing:0.55px;width:9px;overflow:hidden;">ga</div>
<div class="a t" style="left:842px;top:593px;font-size:12px;letter-spacing:0.55px;width:9px;overflow:hidden;">ge</div>
<div class="a t" style="left:842px;top:608px;font-size:12px;letter-spacing:0.55px;width:9px;overflow:hidden;">gr</div>
<div class="a t" style="left:842px;top:623px;font-size:12px;letter-spacing:0.55px;width:9px;overflow:hidden;">gr</div>
<div class="a t" style="left:842px;top:638px;font-size:12px;letter-spacing:0.55px;width:9px;overflow:hidden;">gr</div>
<div class="a t" style="left:842px;top:653px;font-size:12px;letter-spacing:0.55px;width:9px;overflow:hidden;">gr</div>
<div class="a" style="left:448px;top:675px;width:402px;height:16px;background:#c8c8c8;border-top:1px solid #6e6e6e;border-bottom:1px solid #6e6e6e;box-sizing:border-box"></div>
<div class="a" style="left:448px;top:676px;width:15px;height:14px;background:#d0d0d0;border-right:1px solid #6e6e6e;box-shadow:inset 1px 1px 0 #fff"></div>
<svg class="a" style="left:452px;top:678px" width="8" height="10"><path d="M6 0V9L1 4.5Z" fill="#000"/></svg>
<svg class="a" style="left:464px;top:676px" width="113" height="14" viewBox="0 0 113 14"><defs><pattern id="dp" width="4" height="4" patternUnits="userSpaceOnUse"><rect width="4" height="4" fill="#a4a4de"/><rect x="0" y="0" width="1" height="1" fill="#dcdcf8"/><rect x="2" y="2" width="1" height="1" fill="#dcdcf8"/><rect x="1" y="1" width="1" height="1" fill="#505098"/><rect x="3" y="3" width="1" height="1" fill="#505098"/></pattern></defs><rect width="113" height="14" fill="url(#dp)"/><path d="M0.5 0V14" stroke="#e8e8ff"/></svg>
<div class="a" style="left:835px;top:676px;width:15px;height:13px;background:#cccccc;border-left:1px solid #8e8e8e;box-shadow:inset 1px 1px 0 #fff"></div>
<svg class="a" style="left:840px;top:678px" width="8" height="10"><path d="M1 0V9L6 4.5Z" fill="#000"/></svg>
<div class="a" style="left:447px;top:693px;width:404px;height:29px;border:1px solid #fff;"></div>
<div class="a" style="left:446px;top:692px;width:404px;height:29px;border:1px solid #8e8e8e;"></div>
<div class="a t" style="left:453px;top:700px;font-weight:bold;color:#6c6c94;letter-spacing:0.5px;">Filter</div>
<svg class="a" style="left:495px;top:694px" width="22" height="28" viewBox="0 0 22 28"><path d="M1.5 14 V5.5 L5.5 1.5 H18" fill="#cccccc" stroke="#fff"/><path d="M18 1.5 L20 0.5" stroke="#7a7a7a"/><path d="M1.5 27 V18 L5 14.5 H20.5 V27 Z" fill="#a6a6a6" stroke="none"/><path d="M1.5 27 V18 L5 14.5 H20.5" fill="none" stroke="#fff"/><path d="M20.5 14.5V27H1.5" fill="none" stroke="#7a7a7a"/><path d="M5 14.5 H20" stroke="#000" stroke-width="1.5"/><path d="M6 5H16L11 10Z" fill="#000"/><path d="M11 18V25M7.5 21.5H14.5M8.5 19L13.5 24M13.5 19L8.5 24" stroke="#000" stroke-width="1.3"/></svg>
<div class="a" style="left:526px;top:696px;width:322px;height:21px;border:1px solid #8e8e8e;box-shadow:inset 1px 1px 0 #fff,1px 1px 0 #fff;background:#cccccc"></div>
<div class="a t" style="left:532px;top:700px;font-weight:bold;">All</div>
<svg class="a" style="left:832px;top:704px" width="12" height="7"><path d="M0 0H11L5.5 6Z" fill="#000"/></svg>
<div class="a" style="left:228px;top:728px;width:536px;height:22px;background:#cccccc;border-top:1px solid #8e8e8e;border-left:1px solid #8e8e8e;border-bottom:1px solid #fff;border-right:1px solid #fff;box-sizing:border-box"></div>
<div class="a t" style="left:230px;top:733px;font-size:12px;">&gt;</div>
<div class="a" style="left:768px;top:729px;width:90px;height:21px;background:#fff;border:1px solid #000;border-left-width:2px;border-top-width:2px;box-sizing:border-box"></div>
<div class="a t" style="left:773px;top:728px;font-weight:bold;font-size:21px;line-height:22px;letter-spacing:7.9px;transform:scaleX(0.6);transform-origin:0 0;-webkit-text-stroke:0.9px #000;">cadence</div>
<div class="a" style="left:785px;top:730px;width:7px;height:2px;background:#e03030;"></div></body></html>
